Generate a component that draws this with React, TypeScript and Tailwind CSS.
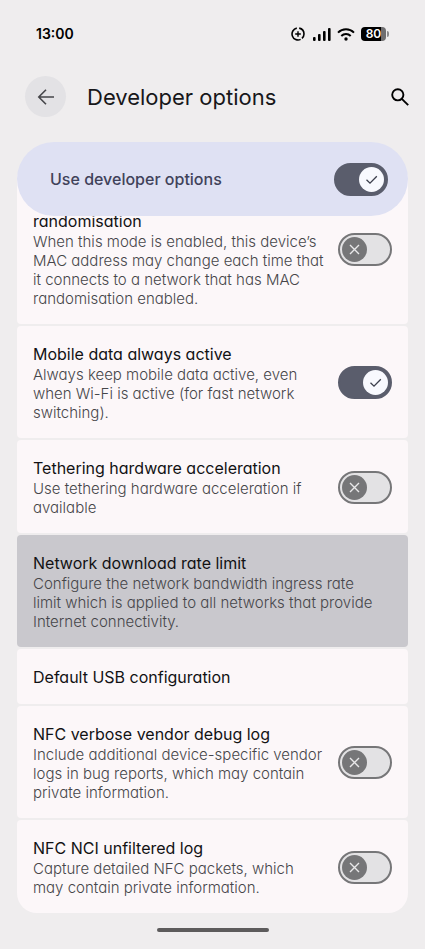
import { useState } from 'react';

type Option = {
  id: string;
  title: string;
  description?: string;
  toggle?: boolean;
  enabled?: boolean;
  pressed?: boolean;
};

const OPTIONS: Option[] = [
  {
    id: 'mac-randomisation',
    title: 'randomisation',
    description:
      'When this mode is enabled, this device’s\nMAC address may change each time that\nit connects to a network that has MAC\nrandomisation enabled.',
    toggle: true,
  },
  {
    id: 'mobile-data',
    title: 'Mobile data always active',
    description: 'Always keep mobile data active, even\nwhen Wi-Fi is active (for fast network\nswitching).',
    toggle: true,
    enabled: true,
  },
  {
    id: 'tethering',
    title: 'Tethering hardware acceleration',
    description: 'Use tethering hardware acceleration if\navailable',
    toggle: true,
  },
  {
    id: 'rate-limit',
    title: 'Network download rate limit',
    description:
      'Configure the network bandwidth ingress rate\nlimit which is applied to all networks that provide\nInternet connectivity.',
    pressed: true,
  },
  { id: 'usb', title: 'Default USB configuration' },
  {
    id: 'nfc-vendor',
    title: 'NFC verbose vendor debug log',
    description: 'Include additional device-specific vendor\nlogs in bug reports, which may contain\nprivate information.',
    toggle: true,
  },
  {
    id: 'nfc-nci',
    title: 'NFC NCI unfiltered log',
    description: 'Capture detailed NFC packets, which\nmay contain private information.',
    toggle: true,
  },
];

function Toggle({ id, defaultOn = false }: { id: string; defaultOn?: boolean }) {
  const [on, setOn] = useState(defaultOn);

  return (
    <span className="relative block h-[33px] w-[54px] shrink-0">
      <input
        id={id}
        type="checkbox"
        role="switch"
        checked={on}
        onChange={(e) => setOn(e.target.checked)}
        className="block h-full w-full cursor-pointer appearance-none rounded-full border-2 border-[#767678] bg-[#e3e2e4] checked:border-[#5a5d6c] checked:bg-[#5a5d6c]"
      />
      {on ? (
        <svg viewBox="0 0 25 25" className="pointer-events-none absolute top-1 right-1 size-[25px]" fill="none">
          <circle cx="12.5" cy="12.5" r="12.5" fill="#f8f9fe" />
          <path d="M7.5 12.8 11 16.2 17.8 9.2" stroke="#3c3f4c" strokeWidth="1.3" />
        </svg>
      ) : (
        <svg viewBox="0 0 25 25" className="pointer-events-none absolute top-1 left-1 size-[25px]" fill="none">
          <circle cx="12.5" cy="12.5" r="12.5" fill="#767678" />
          <path d="m8 8 9 9m0-9-9 9" stroke="#e9e8ea" strokeWidth="1.4" />
        </svg>
      )}
    </span>
  );
}

function OptionText({ option }: { option: Option }) {
  return (
    <>
      <span className="block text-[16px] leading-[22px] text-[#121214]">{option.title}</span>
      {option.description && (
        <span className="block text-[15px] leading-[19px] font-light whitespace-pre text-[#46464a]">
          {option.description}
        </span>
      )}
    </>
  );
}

function OptionRow({ option }: { option: Option }) {
  if (!option.toggle) {
    return (
      <li>
        <button
          type="button"
          className={`block w-full rounded-[4px] px-4 pt-[17px] pb-4 text-left ${
            option.pressed ? 'bg-[#c9c8cd]' : 'bg-[#fcf7f9]'
          }`}
        >
          <OptionText option={option} />
        </button>
      </li>
    );
  }

  return (
    <li className="group flex items-center justify-between rounded-[4px] bg-[#fcf7f9] px-4 pt-[17px] pb-4 last:rounded-b-[20px]">
      <label htmlFor={option.id} className="min-w-0 group-first:pt-5">
        <OptionText option={option} />
      </label>
      <Toggle id={option.id} defaultOn={option.enabled} />
    </li>
  );
}

function StatusBar() {
  return (
    <div className="flex h-[68px] items-center justify-between px-9 text-black">
      <span className="text-[14px] leading-5 font-semibold">13:00</span>
      <div className="flex items-center">
        <svg viewBox="0 0 14 14" className="mr-2 size-[14px]" fill="none" stroke="currentColor">
          <path d="M8.2 1.1A6 6 0 0 1 13 7a6 6 0 0 1-2 4.4M9.6 12.4A6 6 0 1 1 5.8 1.1" strokeWidth="1.6" />
          <path d="M7 4.2v5.6M4.2 7h5.6" strokeWidth="1.4" />
        </svg>
        <svg viewBox="0 0 18 13" className="mr-1.5 h-[13px] w-[18px]" fill="currentColor">
          <rect x="0" y="9" width="2.6" height="4" rx="1" />
          <rect x="5" y="6" width="2.6" height="7" rx="1" />
          <rect x="10" y="3" width="2.6" height="10" rx="1" />
          <rect x="15" y="0" width="2.6" height="13" rx="1" />
        </svg>
        <svg viewBox="0 0 18 13" className="mr-1.5 h-[13px] w-[18px]" fill="none" stroke="currentColor">
          <path d="M1 4.6a11.4 11.4 0 0 1 16 0" strokeWidth="2" />
          <path d="M4.3 8a6.7 6.7 0 0 1 9.4 0" strokeWidth="2" />
          <circle cx="9" cy="11" r="1.7" fill="currentColor" stroke="none" />
        </svg>
        <span className="flex h-[14px] w-[25px] items-center justify-center rounded-[4px] bg-linear-to-r from-black from-80% to-[#6f6e70] to-80% text-[12px] leading-[14px] font-semibold text-white">
          80
        </span>
        <span className="ml-px h-[6px] w-[2px] rounded-r-full bg-[#8b8a8c]" />
      </div>
    </div>
  );
}

export default function App() {
  return (
    <div className="min-h-screen bg-[#efedee] font-['Inter',sans-serif] [font-feature-settings:'cv11']">
      <StatusBar />

      <header className="flex items-center pt-2 pr-4 pb-[25px] pl-[25px]">
        <button
          type="button"
          aria-label="Back"
          className="flex size-[41px] items-center justify-center rounded-full bg-[#e3e2e5] text-[#46464a]"
        >
          <svg viewBox="0 0 18 18" className="size-[18px]" fill="none" stroke="currentColor" strokeWidth="1.6">
            <path d="M17 9H2M9 1.8 1.8 9 9 16.2" />
          </svg>
        </button>
        <h1 className="ml-[21px] flex-1 text-[22px] leading-8 text-[#17171a]">Developer options</h1>
        <button type="button" aria-label="Search" className="text-black">
          <svg viewBox="0 0 18 18" className="size-[18px]" fill="none" stroke="currentColor" strokeWidth="1.9">
            <circle cx="6.8" cy="6.8" r="5.6" />
            <path d="m10.8 10.8 6.4 6.4" />
          </svg>
        </button>
      </header>

      <main className="px-[17px]">
        <div className="relative z-10 flex h-[74px] items-center justify-between rounded-full bg-[#dfe1f3] pr-5 pl-[33px]">
          <label htmlFor="use-developer-options" className="text-[16px] leading-[22px] font-medium text-[#3f425a]">
            Use developer options
          </label>
          <Toggle id="use-developer-options" defaultOn />
        </div>

        <ul className="-mt-[43px] flex flex-col gap-[2px]">
          {OPTIONS.map((option) => (
            <OptionRow key={option.id} option={option} />
          ))}
        </ul>
      </main>

      <div className="mx-auto mt-[15px] h-1 w-[112px] rounded-full bg-[#5d5b5c]" />
    </div>
  );
}
